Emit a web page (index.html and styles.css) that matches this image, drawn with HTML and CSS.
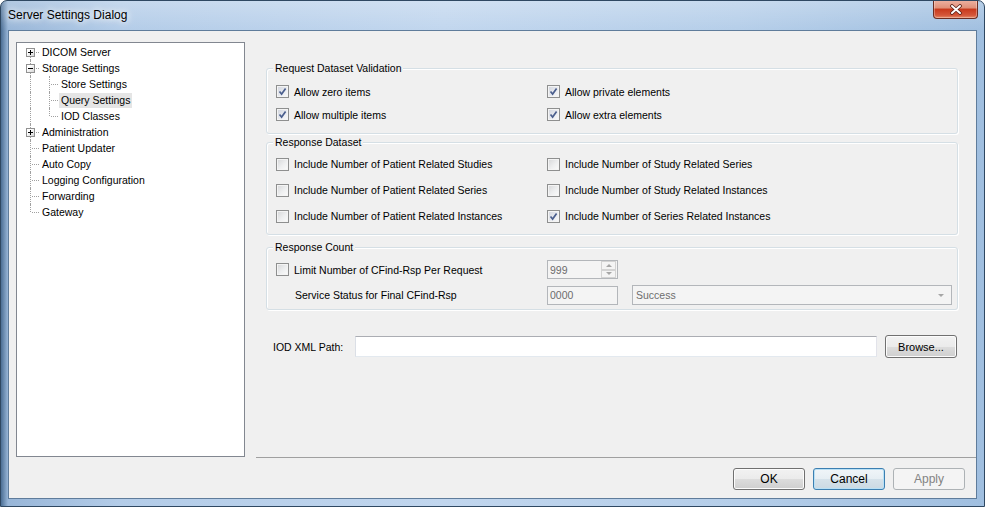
FILE: index.html
```html
<!DOCTYPE html>
<html lang="en">

<head>
    <meta charset="UTF-8">
    <title>Server Settings Dialog</title>
    <link rel="stylesheet" href="styles.css">
</head>

<body>
    <div class="window">
        <div class="titlebar">
            <span class="title">Server Settings Dialog</span>
            <div class="close">
                <svg width="14" height="11" viewBox="0 0 14 11">
                    <path d="M3 2 L11 9 M11 2 L3 9" stroke="#5a2016" stroke-width="3.6" stroke-linecap="round" />
                    <path d="M3 2 L11 9 M11 2 L3 9" stroke="#fff" stroke-width="2" stroke-linecap="round" />
                </svg>
            </div>
        </div>

        <div class="client">
            <div class="main">
                <!-- settings tree -->
                <div class="tree">
                    <div class="node first"><span class="conn"><span class="exp plus"></span></span><span class="label">DICOM Server</span></div>
                    <div class="node"><span class="conn"><span class="exp"></span></span><span class="label">Storage Settings</span></div>
                    <div class="node"><span class="rail"></span><span class="sub"></span><span class="label">Store Settings</span></div>
                    <div class="node"><span class="rail"></span><span class="sub"></span><span class="label selected">Query Settings</span></div>
                    <div class="node"><span class="rail"></span><span class="sub last"></span><span class="label">IOD Classes</span></div>
                    <div class="node"><span class="conn"><span class="exp plus"></span></span><span class="label">Administration</span></div>
                    <div class="node"><span class="conn"></span><span class="label">Patient Updater</span></div>
                    <div class="node"><span class="conn"></span><span class="label">Auto Copy</span></div>
                    <div class="node"><span class="conn"></span><span class="label">Logging Configuration</span></div>
                    <div class="node"><span class="conn"></span><span class="label">Forwarding</span></div>
                    <div class="node last"><span class="conn"></span><span class="label">Gateway</span></div>
                </div>

                <div class="panel">
                    <div class="panel-body">
                        <div class="group group-validation">
                            <div class="group-title">Request Dataset Validation</div>
                            <div class="check-grid">
                                <label class="check"><span class="box on"></span>Allow zero items</label>
                                <label class="check"><span class="box on"></span>Allow private elements</label>
                                <label class="check"><span class="box on"></span>Allow multiple items</label>
                                <label class="check"><span class="box on"></span>Allow extra elements</label>
                            </div>
                        </div>

                        <div class="group group-dataset">
                            <div class="group-title">Response Dataset</div>
                            <div class="check-grid">
                                <label class="check"><span class="box"></span>Include Number of Patient Related Studies</label>
                                <label class="check"><span class="box"></span>Include Number of Study Related Series</label>
                                <label class="check"><span class="box"></span>Include Number of Patient Related Series</label>
                                <label class="check"><span class="box"></span>Include Number of Study Related Instances</label>
                                <label class="check"><span class="box"></span>Include Number of Patient Related Instances</label>
                                <label class="check"><span class="box on"></span>Include Number of Series Related Instances</label>
                            </div>
                        </div>

                        <div class="group group-count">
                            <div class="group-title">Response Count</div>
                            <div class="count-grid">
                                <label class="check"><span class="box"></span>Limit Number of CFind-Rsp Per Request</label>
                                <div class="field spinner">
                                    <span class="value">999</span>
                                    <span class="spin">
                                        <span class="spin-btn"><span class="tri up"></span></span>
                                        <span class="spin-btn"><span class="tri down"></span></span>
                                    </span>
                                </div>
                                <span></span>
                                <span class="status-label">Service Status for Final CFind-Rsp</span>
                                <div class="field"><span class="value">0000</span></div>
                                <div class="field combo"><span class="value">Success</span><span class="tri down"></span></div>
                            </div>
                        </div>

                        <div class="path-row">
                            <span class="path-label">IOD XML Path:</span>
                            <div class="textbox"></div>
                            <button class="btn browse">Browse...</button>
                        </div>
                    </div>
                    <div class="separator"></div>
                </div>
            </div>

            <div class="buttons">
                <button class="btn">OK</button>
                <button class="btn focused">Cancel</button>
                <button class="btn disabled">Apply</button>
            </div>
        </div>
    </div>
</body>

</html>
```

FILE: styles.css
```css
* {
    box-sizing: border-box;
}

body {
    margin: 0;
    font-family: "Liberation Sans", Arial, sans-serif;
    font-size: 10.5px;
    color: #000;
    background: #fff;
}

.window {
    width: 985px;
    height: 507px;
    display: flex;
    flex-direction: column;
    border: 1px solid #2f4862;
    border-radius: 7px 7px 0 0;
    background:
        linear-gradient(180deg, rgba(255, 255, 255, 0.25), rgba(255, 255, 255, 0) 30px),
        linear-gradient(90deg, #4c6f95 0, #98b6d8 7px, #b3cce8 12%, #c1d6ee 45%, #b5cee9 75%, #a0bfe0 100%);
    overflow: hidden;
}

.titlebar {
    height: 29px;
    flex: none;
    display: flex;
    justify-content: space-between;
    align-items: flex-start;
    padding-left: 7px;
}

.title {
    font-size: 12px;
    line-height: 29px;
    text-shadow: 0 0 6px #fff, 0 0 10px #fff;
}

.close {
    width: 45px;
    height: 19px;
    margin-right: 6px;
    margin-top: -1px;
    border: 1px solid #6b2d22;
    border-top: none;
    border-radius: 0 0 4px 4px;
    background: linear-gradient(180deg, #eeb3a3 0, #e08f78 45%, #c8381b 50%, #d4573a 85%, #e88d6a 100%);
    display: flex;
    align-items: center;
    justify-content: center;
    box-shadow: inset 0 0 0 1px rgba(255, 255, 255, 0.3);
}

.client {
    margin: 0 7px;
    height: 469px;
    flex: none;
    border: 1px solid #5f7c9b;
    background: #f0f0f0;
    display: flex;
    flex-direction: column;
}

.main {
    display: flex;
    align-items: flex-start;
    padding: 11px 0 0 7px;
}

/* tree view */
.tree {
    width: 231px;
    height: 415px;
    border: 1px solid #828790;
    background: #fff;
    padding-top: 1px;
}

.node {
    height: 16px;
    display: flex;
    align-items: center;
}

.conn,
.rail,
.sub {
    position: relative;
    height: 16px;
    flex: none;
}

.conn,
.rail {
    width: 23px;
}

.sub {
    width: 19px;
}

.conn::before,
.rail::before {
    content: "";
    position: absolute;
    left: 13px;
    top: 0;
    bottom: 0;
    border-left: 1px dotted #a0a0a0;
}

.conn::after {
    content: "";
    position: absolute;
    left: 15px;
    top: 8px;
    width: 7px;
    border-top: 1px dotted #a0a0a0;
}

.first .conn::before {
    top: 8px;
}

.last .conn::before {
    bottom: 8px;
}

.sub::before {
    content: "";
    position: absolute;
    left: 9px;
    top: 0;
    bottom: 0;
    border-left: 1px dotted #a0a0a0;
}

.sub.last::before {
    bottom: 8px;
}

.sub::after {
    content: "";
    position: absolute;
    left: 11px;
    top: 8px;
    width: 7px;
    border-top: 1px dotted #a0a0a0;
}

.exp {
    position: absolute;
    left: 9px;
    top: 4px;
    width: 9px;
    height: 9px;
    border: 1px solid #919191;
    background: linear-gradient(135deg, #fff 30%, #d6d6d6);
    z-index: 1;
}

.exp::before {
    content: "";
    position: absolute;
    left: 1px;
    top: 3px;
    width: 5px;
    height: 1px;
    background: #000;
}

.exp.plus::after {
    content: "";
    position: absolute;
    left: 3px;
    top: 1px;
    width: 1px;
    height: 5px;
    background: #000;
}

.label {
    padding: 1px 2px;
    line-height: 13px;
    white-space: nowrap;
}

.label.selected {
    background: #e5e5e5;
}

/* right side */
.panel {
    margin-left: 11px;
    flex: 1;
    height: 416px;
    display: flex;
    flex-direction: column;
}

.panel-body {
    flex: 1;
    padding: 26px 18px 0 10px;
}

.separator {
    height: 1px;
    background: #a0a0a0;
}

.group {
    border: 1px solid #d5dfe5;
    border-radius: 3px;
    box-shadow: inset 1px 1px 0 #fff, 1px 1px 0 #fff;
    padding: 0 5px 0 9px;
}

.group-title {
    width: fit-content;
    margin: -8px 0 0 -3px;
    padding: 0 2px;
    line-height: 14px;
    background: #f0f0f0;
}

.group-validation {
    padding-bottom: 7px;
}

.group-validation .check-grid {
    margin-top: 5px;
    grid-auto-rows: 23px;
}

.group-dataset {
    margin-top: 8px;
    padding-bottom: 5px;
}

.group-dataset .check-grid {
    margin-top: 2px;
    grid-auto-rows: 26px;
}

.group-count {
    margin-top: 12px;
    padding-bottom: 1px;
}

.check-grid {
    display: grid;
    grid-template-columns: 271px 1fr;
    align-items: center;
}

.count-grid {
    margin-top: 3px;
    display: grid;
    grid-template-columns: 271px 85px 1fr;
    grid-template-rows: 25px 26px;
    align-items: center;
}

.check {
    display: flex;
    align-items: center;
    white-space: nowrap;
}

.box {
    width: 13px;
    height: 13px;
    margin-right: 5px;
    border: 1px solid #8e8f8f;
    background: linear-gradient(135deg, #d5d6d8 0, #eeeff0 55%, #fbfbfb 100%);
    box-shadow: inset 0 0 0 1px #f4f4f4;
    flex: none;
}

.box.on {
    background:
        url("data:image/svg+xml,%3Csvg xmlns='http://www.w3.org/2000/svg' width='11' height='11'%3E%3Cpath d='M2.5 5.5 L4.6 8 L8.6 2.5' fill='none' stroke='%234b5f8e' stroke-width='1.7'/%3E%3C/svg%3E") center / 11px 11px no-repeat,
        linear-gradient(135deg, #cfd3dc 0, #e9ebf0 55%, #fafafa 100%);
}

.status-label {
    padding-left: 19px;
    white-space: nowrap;
}

.field {
    width: 71px;
    height: 19px;
    border: 1px solid #b3b6ba;
    background: #f4f4f4;
    color: #6d6d6d;
    display: flex;
    align-items: center;
    padding-left: 2px;
}

.field .value {
    flex: 1;
}

.spin {
    width: 15px;
    height: 17px;
    display: flex;
    flex-direction: column;
    margin-right: 1px;
}

.spin-btn {
    flex: 1;
    border: 1px solid #d3d3d3;
    background: #f4f4f4;
    display: flex;
    align-items: center;
    justify-content: center;
}

.tri {
    width: 0;
    height: 0;
    border-left: 3px solid transparent;
    border-right: 3px solid transparent;
}

.tri.up {
    border-bottom: 3px solid #a6a6a6;
}

.tri.down {
    border-top: 3px solid #a6a6a6;
}

.combo {
    width: 320px;
    height: 20px;
    padding-right: 7px;
}

.combo .value {
    padding-left: 1px;
}

.path-row {
    margin-top: 25px;
    height: 23px;
    display: flex;
    align-items: center;
}

.path-label {
    width: 89px;
    padding-left: 7px;
}

.textbox {
    width: 522px;
    height: 21px;
    background: #fff;
    border: 1px solid #e2e3ea;
    border-top-color: #abadb3;
    border-left-color: #dbdfe6;
    border-bottom-color: #e3e9ef;
}

.btn {
    width: 72px;
    height: 22px;
    font-family: inherit;
    font-size: 12px;
    color: #000;
    border: 1px solid #707070;
    border-radius: 3px;
    background: linear-gradient(180deg, #f2f2f2 0, #ebebeb 50%, #dddddd 50%, #cfcfcf 100%);
    box-shadow: inset 0 0 0 1px #fcfcfc;
    padding: 0;
}

.browse {
    width: 72px;
    height: 23px;
    margin-left: 8px;
    font-size: 11px;
}

.buttons {
    margin-top: 10px;
    display: flex;
    justify-content: flex-end;
    gap: 8px;
    padding-right: 11px;
}

.btn.focused {
    border-color: #3c7fb1;
    box-shadow: inset 0 0 0 1px #b9e0f5;
    background: linear-gradient(180deg, #f0f5f8 0, #e6eef3 50%, #d6e2ea 50%, #cbd9e3 100%);
}

.btn.disabled {
    border-color: #adb2b5;
    background: #f4f4f4;
    color: #838383;
    box-shadow: none;
}
```
